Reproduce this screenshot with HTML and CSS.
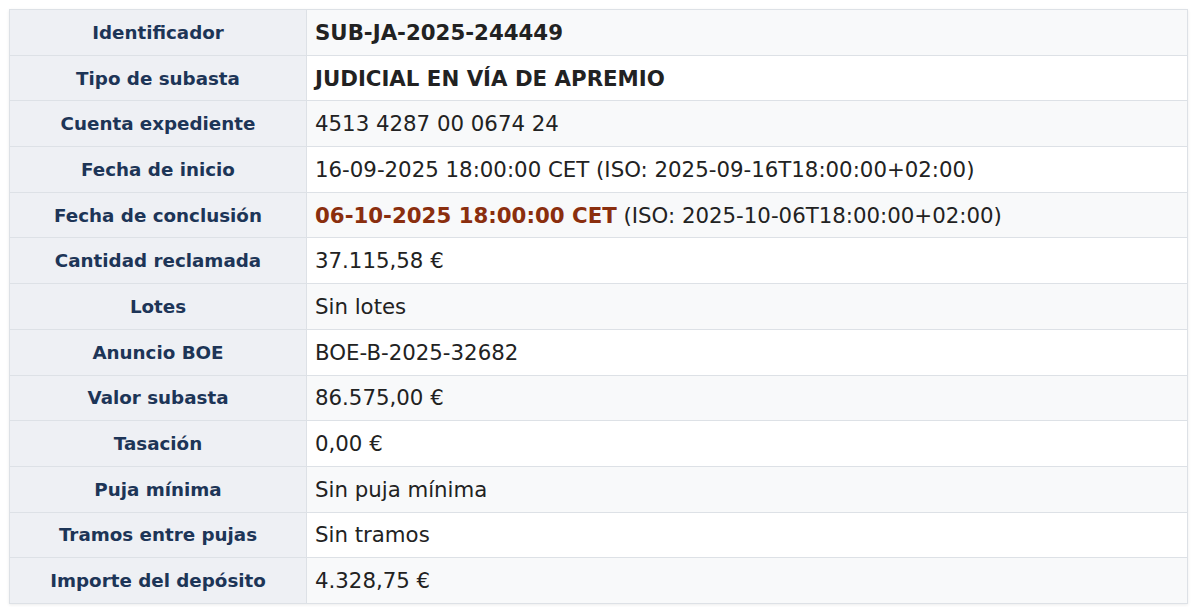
FILE: index.html
```html
<!DOCTYPE html>
<html>
<head>
  <title>Subasta SUB-JA-2025-244449</title>
  <link rel="stylesheet" href="styles.css">
</head>
<body>
  <table class="datos">
    <tr><th>Identificador</th><td><strong>SUB-JA-2025-244449</strong></td></tr>
    <tr><th>Tipo de subasta</th><td><strong>JUDICIAL EN VÍA DE APREMIO</strong></td></tr>
    <tr><th>Cuenta expediente</th><td>4513 4287 00 0674 24</td></tr>
    <tr><th>Fecha de inicio</th><td>16-09-2025 18:00:00 CET (ISO: 2025-09-16T18:00:00+02:00)</td></tr>
    <tr><th>Fecha de conclusión</th><td><strong class="destacado">06-10-2025 18:00:00 CET</strong> (ISO: 2025-10-06T18:00:00+02:00)</td></tr>
    <tr><th>Cantidad reclamada</th><td>37.115,58 €</td></tr>
    <tr><th>Lotes</th><td>Sin lotes</td></tr>
    <tr><th>Anuncio BOE</th><td>BOE-B-2025-32682</td></tr>
    <tr><th>Valor subasta</th><td>86.575,00 €</td></tr>
    <tr><th>Tasación</th><td>0,00 €</td></tr>
    <tr><th>Puja mínima</th><td>Sin puja mínima</td></tr>
    <tr><th>Tramos entre pujas</th><td>Sin tramos</td></tr>
    <tr><th>Importe del depósito</th><td>4.328,75 €</td></tr>
  </table>
</body>
</html>
```

FILE: styles.css
```css
body {
  margin: 0;
  padding: 9px;
  font-family: "DejaVu Sans", Verdana, sans-serif;
  background-color: #ffffff;
}

table.datos {
  width: 1179px;
  border-collapse: collapse;
  border: 1px solid #dde1e6;
  box-shadow: 0 1px 3px rgba(0, 0, 0, 0.08);
}

table.datos tr {
  height: 45.7px;
}

table.datos th,
table.datos td {
  border: 1px solid #dde1e6;
  padding: 0 8px;
  font-size: 21.3px;
}

table.datos th {
  width: 280px;
  background-color: #eef0f4;
  color: #1d3557;
  font-size: 18.3px;
  font-weight: bold;
  text-align: center;
}

table.datos td {
  color: #222222;
  background-color: #ffffff;
}

table.datos tr:nth-child(odd) td {
  background-color: #f8f9fa;
}

.destacado {
  color: #8a2e0e;
}
```
